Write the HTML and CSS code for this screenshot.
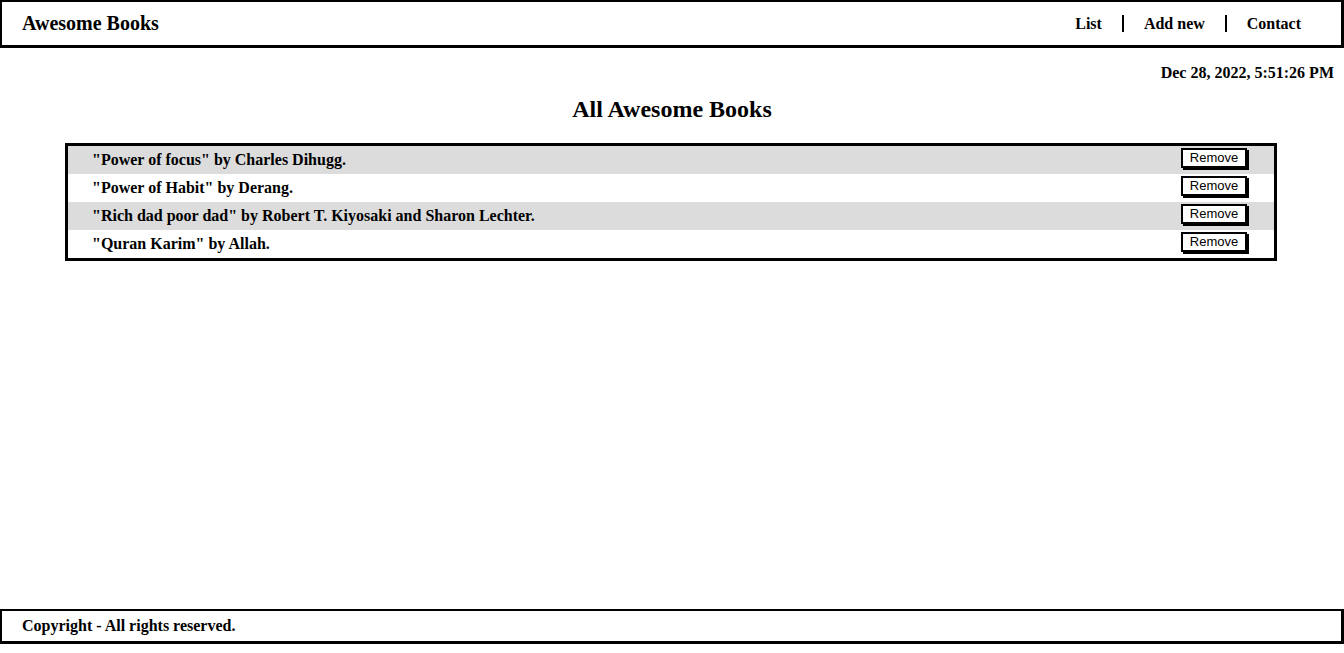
FILE: index.html
```html
<!DOCTYPE html>
<html lang="en">
<head>
<meta charset="utf-8">
<title>Awesome Books</title>
<link rel="stylesheet" href="styles.css">
</head>
<body>
<div class="page">
  <header class="topbar">
    <h1 class="brand">Awesome Books</h1>
    <nav class="nav">
      <a class="nav-link" href="#">List</a>
      <a class="nav-link sep" href="#">Add new</a>
      <a class="nav-link sep" href="#">Contact</a>
    </nav>
  </header>
  <main class="main">
    <p class="date">Dec 28, 2022, 5:51:26 PM</p>
    <h2 class="title">All Awesome Books</h2>
    <ul class="books">
      <li class="book"><span class="book-text">"Power of focus" by Charles Dihugg.</span><button class="remove">Remove</button></li>
      <li class="book"><span class="book-text">"Power of Habit" by Derang.</span><button class="remove">Remove</button></li>
      <li class="book"><span class="book-text">"Rich dad poor dad" by Robert T. Kiyosaki and Sharon Lechter.</span><button class="remove">Remove</button></li>
      <li class="book"><span class="book-text">"Quran Karim" by Allah.</span><button class="remove">Remove</button></li>
    </ul>
  </main>
  <footer class="footer">
    <p class="copy">Copyright - All rights reserved.</p>
  </footer>
</div>
</body>
</html>
```
FILE: styles.css
```css
html, body {
  margin: 0;
  padding: 0;
  background: #fff;
}
body {
  font-family: "Liberation Serif", "Times New Roman", serif;
  color: #000;
}
.page {
  min-height: 653px;
  height: 100vh;
  display: flex;
  flex-direction: column;
  box-sizing: border-box;
  padding-bottom: 9px;
}
.topbar {
  display: flex;
  align-items: center;
  justify-content: space-between;
  height: 48px;
  box-sizing: border-box;
  border-style: solid;
  border-color: #000;
  border-width: 2px 3px 3px 2px;
  padding: 0 40px 0 20px;
}
.brand {
  margin: 0;
  font-size: 20px;
  font-weight: bold;
}
.nav {
  display: flex;
  align-items: center;
}
.nav-link {
  color: #000;
  text-decoration: none;
  font-weight: bold;
  font-size: 16px;
  padding: 0 20px;
  line-height: 17px;
}
.nav-link:first-child {
  padding-left: 0;
}
.nav-link:last-child {
  padding-right: 0;
}
.sep {
  border-left: 2px solid #000;
}
.main {
  flex: 1;
  display: flex;
  flex-direction: column;
}
.date {
  margin: 16px 10px 0 0;
  text-align: right;
  font-weight: bold;
  font-size: 16px;
  line-height: 17px;
}
.title {
  margin: 14px 0 0;
  text-align: center;
  font-size: 24px;
  line-height: 28px;
}
.books {
  list-style: none;
  margin: 20px 0 0 65px;
  padding: 0;
  width: 1212px;
  box-sizing: border-box;
  border: 3px solid #000;
}
.book {
  display: flex;
  align-items: center;
  justify-content: space-between;
  height: 28px;
  padding: 0 27px 0 24px;
  font-weight: bold;
  font-size: 16px;
}
.book:nth-child(odd) {
  background: #dcdcdc;
}
.book-text {
  line-height: 28px;
}
.remove {
  font-family: "Liberation Sans", Arial, sans-serif;
  font-size: 13px;
  background: #fff;
  color: #000;
  border: 2px solid #000;
  box-shadow: 2px 2px 0 #000;
  padding: 0 6px;
  height: 20px;
  width: 66px;
  line-height: 14px;
  margin-top: -5px;
}
.footer {
  height: 35px;
  box-sizing: border-box;
  border-style: solid;
  border-color: #000;
  border-width: 2px 3px 3px 2px;
  padding: 0 20px;
  display: flex;
  align-items: center;
}
.copy {
  margin: 0;
  font-weight: bold;
  font-size: 16px;
}
```
